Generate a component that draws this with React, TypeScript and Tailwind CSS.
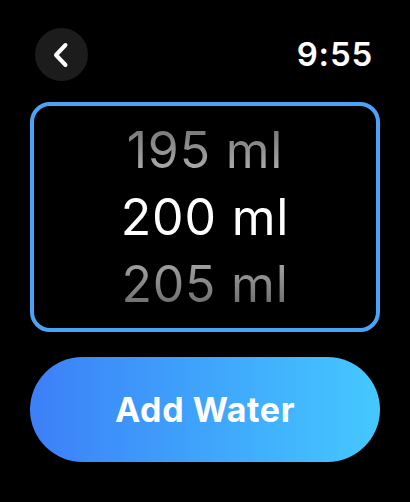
import React from "react";

export default function App() {
  return (
    <div className="w-[410px] h-[502px] bg-black overflow-hidden" style={{ fontFamily: "Inter, 'Noto Sans', sans-serif" }}>
      <div className="flex items-center justify-between pl-[35px] pr-[37px] pt-[28px]">
        <div className="w-[53px] h-[53px] rounded-full bg-[#1c1c1c] flex items-center justify-center">
          <svg width="16" height="26" viewBox="0 0 16 26" fill="none" className="ml-[-2px]">
            <path d="M12.5 3 L3 13 L12.5 23" stroke="white" strokeWidth="4" strokeLinecap="round" strokeLinejoin="round" />
          </svg>
        </div>
        <div className="text-white text-[33px] font-semibold leading-none tracking-[0.8px]">9:55</div>
      </div>
      <div className="mx-[30px] mt-[21px] h-[230px] rounded-[20px] border-[4px] border-[#4aa3f7] flex flex-col items-center justify-center">
        <div className="text-[50px] leading-[67px] font-normal tracking-[0.8px] bg-gradient-to-b from-[#6a6a6a] to-[#bdbdbd] bg-clip-text text-transparent">195 ml</div>
        <div className="text-[50px] leading-[67px] font-normal tracking-[0.8px] text-white">200 ml</div>
        <div className="text-[50px] leading-[67px] font-normal tracking-[0.8px] bg-gradient-to-b from-[#b0b0b0] to-[#606060] bg-clip-text text-transparent">205 ml</div>
      </div>
      <div className="mx-[30px] mt-[25px] h-[105px] rounded-full bg-gradient-to-r from-[#3d7ff8] to-[#45c8fe] flex items-center justify-center">
        <span className="text-white text-[34px] font-bold tracking-[0.6px]">Add Water</span>
      </div>
    </div>
  );
}
